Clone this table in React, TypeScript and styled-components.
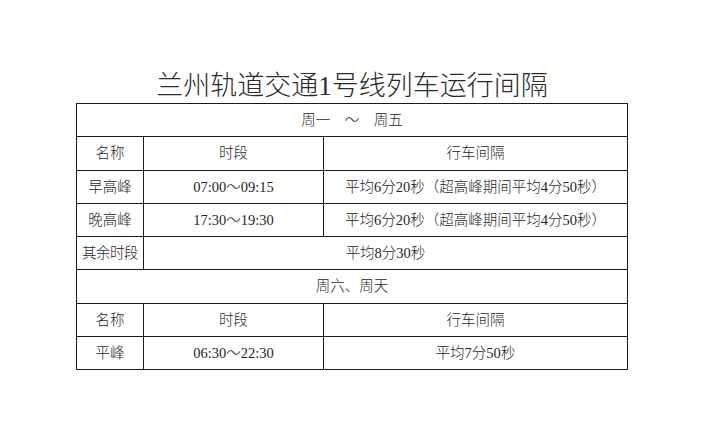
import styled, { createGlobalStyle } from "styled-components";

const GlobalStyle = createGlobalStyle`
  html, body {
    margin: 0;
    padding: 0;
    background: #ffffff;
  }
  body {
    font-family: "Liberation Serif", "Noto Sans CJK SC", serif;
    color: #222;
  }
`;

type Row = {
  name: string;
  time: string;
  interval: string;
};

const weekdayRows: Row[] = [
  { name: "早高峰", time: "07:00～09:15", interval: "平均6分20秒（超高峰期间平均4分50秒）" },
  { name: "晚高峰", time: "17:30～19:30", interval: "平均6分20秒（超高峰期间平均4分50秒）" },
];

const weekendRows: Row[] = [
  { name: "平峰", time: "06:30～22:30", interval: "平均7分50秒" },
];

const App = (): JSX.Element => {
  return (
    <Page>
      <GlobalStyle />
      <Title>兰州轨道交通1号线列车运行间隔</Title>
      <Table>
        <colgroup>
          <col style={{ width: 67 }} />
          <col style={{ width: 180 }} />
          <col style={{ width: 304 }} />
        </colgroup>
        <tbody>
          <tr>
            <Cell colSpan={3}>周一　～　周五</Cell>
          </tr>
          <HeaderRow />
          {weekdayRows.map((row) => (
            <DataRow key={row.name} row={row} />
          ))}
          <tr>
            <Cell $tight>其余时段</Cell>
            <Cell colSpan={2}>平均8分30秒</Cell>
          </tr>
          <tr>
            <Cell colSpan={3}>周六、周天</Cell>
          </tr>
          <HeaderRow />
          {weekendRows.map((row) => (
            <DataRow key={row.name} row={row} />
          ))}
        </tbody>
      </Table>
    </Page>
  );
};

const HeaderRow = (): JSX.Element => (
  <tr>
    <Cell>名称</Cell>
    <Cell>时段</Cell>
    <Cell>行车间隔</Cell>
  </tr>
);

const DataRow = ({ row }: { row: Row }): JSX.Element => (
  <tr>
    <Cell>{row.name}</Cell>
    <Cell>{row.time}</Cell>
    <Cell>{row.interval}</Cell>
  </tr>
);

export default App;

const Page = styled.div`
  width: 704px;
  padding-top: 70px;
  display: flex;
  flex-direction: column;
  align-items: center;
`;

const Title = styled.h1`
  margin: 0 0 1px;
  height: 32px;
  line-height: 32px;
  font-size: 27px;
  font-weight: 300;
  color: #2a2a2a;
  white-space: nowrap;
`;

const Table = styled.table`
  width: 552px;
  border-collapse: collapse;
  table-layout: fixed;

  tr {
    height: 33.25px;
  }
`;

const Cell = styled.td<{ $tight?: boolean }>`
  border: 1px solid #1a1a1a;
  padding: 0;
  text-align: center;
  vertical-align: middle;
  font-size: 14.5px;
  font-weight: 300;
  line-height: 20px;
  color: #262626;
  white-space: nowrap;
  letter-spacing: ${(p) => (p.$tight ? "-0.5px" : "0")};
`;
